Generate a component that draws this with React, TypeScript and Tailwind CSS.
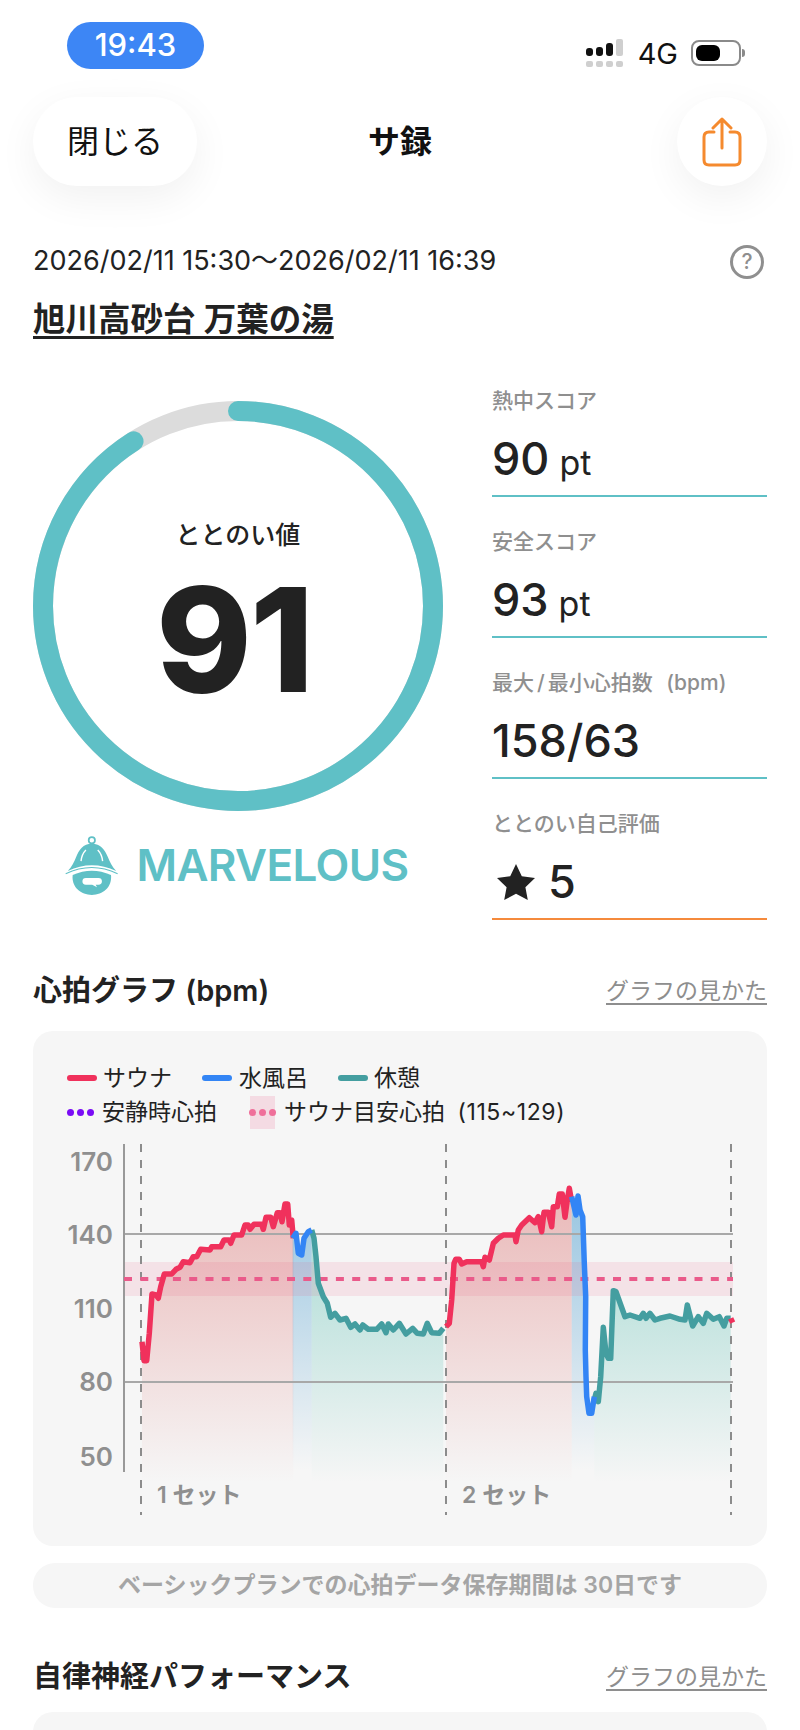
import React from 'react';

type Raw = [number, number][];

// Trazos leidos de los recortes: origen del recorte + coordenada / 3
function toPts(ox: number, oy: number, raw: Raw): Raw {
  return raw.map(([x, y]) => [ox + x / 3, oy + y / 3] as [number, number]);
}

const red1 = toPts(130, 1190, [
  [36, 455], [42, 512], [50, 512], [58, 430], [66, 312], [78, 315], [85, 325], [92, 290], [103, 252], [125, 252],
  [138, 238], [150, 232], [160, 215], [180, 218], [190, 200], [200, 200], [212, 178], [240, 180], [245, 170], [272, 170],
  [282, 150], [298, 150], [302, 160], [312, 135], [335, 135], [345, 105], [355, 105], [360, 118], [372, 103], [395, 103],
  [400, 118], [408, 82], [422, 82], [430, 110], [442, 68], [450, 68], [456, 95], [465, 42], [473, 42], [478, 105],
  [485, 90], [490, 145],
]);
const blue1 = toPts(280, 1190, [[38, 145], [48, 130], [55, 190], [65, 195], [72, 145], [85, 125], [95, 120]]);
const teal1 = toPts(280, 1190, [
  [95, 120], [102, 145], [108, 200], [115, 280], [130, 320], [142, 340], [152, 382], [165, 370], [180, 390], [198, 385],
  [212, 412], [225, 402], [240, 420], [248, 405], [265, 418], [290, 418], [305, 402], [318, 428], [325, 402], [340, 420],
  [358, 400], [378, 432], [398, 415], [412, 430], [430, 432], [442, 400], [455, 428], [478, 430], [490, 415],
]);
const red2 = toPts(440, 1180, [
  [18, 440], [28, 430], [35, 360], [42, 250], [47, 238], [58, 238], [65, 252], [80, 245], [125, 245], [130, 260],
  [135, 232], [148, 240], [160, 190], [175, 175], [190, 165], [225, 165], [228, 185], [235, 150], [245, 135], [268, 113],
  [285, 128], [295, 110], [305, 155], [312, 97], [325, 97], [335, 140], [340, 80], [352, 80], [358, 42], [367, 42],
  [375, 112], [382, 60], [388, 25], [395, 65],
]);
const blue2 = [
  ...toPts(440, 1180, [[395, 50], [408, 105], [414, 48], [420, 90], [428, 110], [433, 250], [437, 350]]),
  ...toPts(560, 1250, [[76, 300], [78, 380], [80, 440], [87, 490], [95, 490], [103, 440]]),
];
const teal2 = toPts(560, 1250, [
  [103, 450], [108, 430], [115, 455], [122, 380], [130, 232], [138, 310], [145, 325], [152, 325], [160, 122], [168, 125],
  [195, 200], [210, 195], [240, 205], [250, 190], [258, 205], [270, 190], [285, 210], [300, 205], [330, 198], [360, 208],
  [375, 210], [382, 165], [398, 228], [415, 200], [430, 220], [440, 190], [460, 208], [478, 200], [492, 228], [500, 205],
  [512, 205],
]);
const redEnd = toPts(560, 1250, [[512, 205], [518, 218]]);

const line = (p: Raw) => p.map(([x, y]) => `${x.toFixed(1)},${y.toFixed(1)}`).join(' ');
const area = (p: Raw) => {
  const bottom = 1482;
  return `${p[0][0].toFixed(1)},${bottom} ${line(p)} ${p[p.length - 1][0].toFixed(1)},${bottom}`;
};

const yLabels: [string, number][] = [['170', 1171], ['140', 1244], ['110', 1318], ['80', 1391], ['50', 1466]];

function HeartChart() {
  return (
    <svg width="734" height="410" viewBox="33 1136 734 410" className="mt-[7px] block">
      <defs>
        <linearGradient id="gradRed" gradientUnits="userSpaceOnUse" x1="0" y1="1200" x2="0" y2="1482">
          <stop offset="0" stopColor="#d8605f" stopOpacity="0.4" />
          <stop offset="1" stopColor="#d8605f" stopOpacity="0" />
        </linearGradient>
        <linearGradient id="gradBlue" gradientUnits="userSpaceOnUse" x1="0" y1="1200" x2="0" y2="1470">
          <stop offset="0" stopColor="#4f9fd0" stopOpacity="0.55" />
          <stop offset="1" stopColor="#4f9fd0" stopOpacity="0" />
        </linearGradient>
        <linearGradient id="gradTeal" gradientUnits="userSpaceOnUse" x1="0" y1="1220" x2="0" y2="1482">
          <stop offset="0" stopColor="#3fb5a5" stopOpacity="0.42" />
          <stop offset="1" stopColor="#3fb5a5" stopOpacity="0" />
        </linearGradient>
      </defs>

      <polygon points={area(red1)} fill="url(#gradRed)" />
      <polygon points={area(blue1)} fill="url(#gradBlue)" />
      <polygon points={area(teal1)} fill="url(#gradTeal)" />
      <polygon points={area(red2)} fill="url(#gradRed)" />
      <polygon points={area(blue2)} fill="url(#gradBlue)" />
      <polygon points={area(teal2)} fill="url(#gradTeal)" />

      <rect x="124" y="1262" width="609" height="34" fill="#e8557f" opacity="0.12" />
      <line x1="124" y1="1234" x2="733" y2="1234" stroke="#a8a8a8" strokeWidth="2" />
      <line x1="124" y1="1382" x2="733" y2="1382" stroke="#a8a8a8" strokeWidth="2" />
      <line x1="124" y1="1144" x2="124" y2="1472" stroke="#999999" strokeWidth="2" />
      {[141, 446, 731].map(x => (
        <line key={x} x1={x} y1="1144" x2={x} y2="1515" stroke="#8c8c8c" strokeWidth="2" strokeDasharray="8 8" />
      ))}
      <line x1="124" y1="1279" x2="733" y2="1279" stroke="#ea5a8a" strokeWidth="4" strokeDasharray="8 8.3" />

      <g fill="none" strokeWidth="5.5" strokeLinejoin="round">
        <polyline points={line(teal1)} stroke="#449ea0" />
        <polyline points={line(teal2)} stroke="#449ea0" />
        <polyline points={line(red1)} stroke="#f0315c" />
        <polyline points={line(red2)} stroke="#f0315c" />
        <polyline points={line(redEnd)} stroke="#f0315c" />
        <polyline points={line(blue1)} stroke="#3385f5" />
        <polyline points={line(blue2)} stroke="#3385f5" />
      </g>

      <g className="font-semibold" fill="#8f8f8f" fontSize="26" textAnchor="end">
        {yLabels.map(([label, y]) => (
          <text key={label} x="113" y={y}>{label}</text>
        ))}
      </g>
      <g className="font-semibold" fill="#8f8f8f" fontSize="23">
        <text x="157" y="1503">1 セット</text>
        <text x="462" y="1503">2 セット</text>
      </g>
    </svg>
  );
}

function Dots({ color }: { color: string }) {
  return (
    <div className="flex gap-[3px]">
      {[0, 1, 2].map(i => (
        <div key={i} className="w-[7px] h-[7px] rounded-full" style={{ backgroundColor: color }} />
      ))}
    </div>
  );
}

function Stat({ label, children, orange }: { label: React.ReactNode; children: React.ReactNode; orange?: boolean }) {
  return (
    <div className={`h-[141px] border-b-2 pt-[31px] ${orange ? 'border-[#f58a3c]' : 'border-[#5fc0c6]'}`}>
      <div className="text-[21px] leading-[28px] font-medium text-[#8f8f8f] whitespace-nowrap">{label}</div>
      <div className="mt-[19px] h-[50px] flex items-baseline leading-[50px] text-[#222222] whitespace-nowrap">{children}</div>
    </div>
  );
}

function Helmet() {
  return (
    <svg width="54" height="60" viewBox="40 75 155 172" fill="#5fc0c6">
      <circle cx="117" cy="90" r="9" fill="none" stroke="#5fc0c6" strokeWidth="5" />
      <path d="M117 100C92 100 80 118 72 138C66 152 60 166 48 178Q117 145 187 178C175 166 169 152 163 138C155 118 142 100 117 100Z" />
      <path d="M86 150Q88 130 100 118M148 150Q146 130 134 118" fill="none" stroke="#ffffff" strokeWidth="4" />
      <path d="M42 186Q117 150 191 186" fill="none" stroke="#5fc0c6" strokeWidth="3" />
      <path d="M62 190Q117 165 172 190C176 225 148 247 117 247C86 247 58 225 62 190Z" />
      <path d="M100 198H136Q146 198 146 208Q146 218 136 218H128L132 225L118 218H100Q90 218 90 208Q90 198 100 198Z" fill="#ffffff" />
    </svg>
  );
}

function SectionTitle({ title }: { title: string }) {
  return (
    <div className="h-[40px] flex items-center justify-between">
      <div className="text-[29px] font-semibold text-[#222222] whitespace-nowrap">{title}</div>
      <div className="text-[23px] text-[#8e8e8e] underline underline-offset-4 whitespace-nowrap">グラフの見かた</div>
    </div>
  );
}

export default function App() {
  return (
    <div className="w-[800px] h-[1730px] overflow-hidden bg-white pt-[22px] font-['Inter','Noto_Sans_CJK_JP',sans-serif] text-[#222222]">
      {/* status bar */}
      <div className="h-[47px] flex justify-between pl-[67px] pr-[55px]">
        <div className="w-[137px] h-[47px] rounded-full bg-[#3d86f5] flex items-center justify-center text-white text-[31px] font-medium">19:43</div>
        <div className="mt-[17px] h-[28px] flex items-center gap-[13px]">
          <svg width="42" height="28" viewBox="0 0 42 28" className="mr-[-2px]">
            {[0, 10, 20, 30].map(x => (
              <rect key={x} x={x + 1} y="22" width="7" height="6" rx="2" fill="#cfcfcf" />
            ))}
            <rect x="1" y="9" width="7" height="8" rx="3" fill="#111111" />
            <rect x="11" y="8" width="7" height="9" rx="3" fill="#111111" />
            <rect x="21" y="4" width="7" height="13" rx="3" fill="#111111" />
            <rect x="31" y="0" width="7" height="17" rx="2" fill="#cfcfcf" />
          </svg>
          <span className="text-[29px] leading-none text-[#111111]">4G</span>
          <div className="flex items-center gap-[1px]">
            <div className="w-[50px] h-[26px] rounded-[8px] border-2 border-[#8a8a8a] p-[3px]">
              <div className="w-[24px] h-full rounded-[6px] bg-black" />
            </div>
            <div className="w-[3px] h-[8px] rounded-r-full bg-[#8a8a8a]" />
          </div>
        </div>
      </div>

      {/* header */}
      <div className="mt-[28px] h-[89px] px-[33px] grid grid-cols-[1fr_auto_1fr] items-center">
        <div className="justify-self-start w-[164px] h-[89px] rounded-[44px] bg-white shadow-[0_12px_40px_rgba(0,0,0,0.06)] flex items-center justify-center text-[32px] text-[#111111]">閉じる</div>
        <div className="text-[32px] font-bold text-[#111111]">サ録</div>
        <div className="justify-self-end w-[90px] h-[89px] rounded-full bg-white shadow-[0_12px_40px_rgba(0,0,0,0.06)] flex items-center justify-center">
          <svg width="40" height="50" viewBox="0 0 40 50" fill="none" stroke="#f58a2e" strokeWidth="3" strokeLinecap="round" strokeLinejoin="round">
            <path d="M12 15H7Q2 15 2 20V43Q2 48 7 48H33Q38 48 38 43V20Q38 15 33 15H28" />
            <path d="M20 31V2M11 11L20 2L29 11" />
          </svg>
        </div>
      </div>

      {/* date + venue */}
      <div className="mt-[59px] h-[33px] px-[33px] flex items-center justify-between">
        <div className="text-[27px] whitespace-nowrap">2026/02/11 15:30～2026/02/11 16:39</div>
        <div className="w-[34px] h-[34px] -translate-x-[3px] rounded-full border-[3px] border-[#8f8f8f] flex items-center justify-center text-[21px] font-medium text-[#8f8f8f]">?</div>
      </div>
      <div className="mt-[22px] px-[33px] h-[40px] leading-[40px]">
        <span className="text-[32.5px] font-semibold underline decoration-[3px] underline-offset-[5px] whitespace-nowrap">旭川高砂台 万葉の湯</span>
      </div>

      {/* score */}
      <div className="mt-[14px] px-[33px] flex justify-between">
        <div className="pt-[47px] w-[410px]">
          <div className="relative w-[410px] h-[410px]">
            <svg width="410" height="410" viewBox="0 0 410 410">
              <circle cx="205" cy="205" r="195" fill="none" stroke="#dcdcdc" strokeWidth="20" />
              <circle cx="205" cy="205" r="195" fill="none" stroke="#5fc0c6" strokeWidth="20" strokeLinecap="round" pathLength={100} strokeDasharray="91 100" transform="rotate(-90 205 205)" />
            </svg>
            <div className="absolute inset-0 flex flex-col items-center">
              <div className="mt-[118px] text-[25px] leading-[32px] font-medium">ととのい値</div>
              <div className="mt-[15px] -translate-x-[4px] text-[145px] leading-[147px] font-extrabold tracking-[-2px]">91</div>
            </div>
          </div>
          <div className="mt-[24px] -translate-x-[1px] flex items-center justify-center gap-[17px]">
            <Helmet />
            <span className="text-[44px] leading-[57px] font-semibold tracking-[-0.6px] text-[#5fc0c6]">MARVELOUS</span>
          </div>
        </div>
        <div className="mt-[2px] w-[275px]">
          <Stat label="熱中スコア">
            <span className="text-[45px] font-medium">90</span>
            <span className="ml-[10px] text-[34px]">pt</span>
          </Stat>
          <Stat label="安全スコア">
            <span className="text-[45px] font-medium">93</span>
            <span className="ml-[10px] text-[34px]">pt</span>
          </Stat>
          <Stat label={<span className="[word-spacing:8px]">最大<span className="mx-[3px]">/</span>最小心拍数 (bpm)</span>}>
            <span className="text-[45px] font-medium">158/63</span>
          </Stat>
          <Stat label="ととのい自己評価" orange>
            <svg width="40" height="38" viewBox="0 0 40 38" fill="#222222" className="self-center ml-[4px]">
              <path d="M20 1L25.8 13.2L39 15L29.4 24.2L31.8 37L20 30.8L8.2 37L10.6 24.2L1 15L14.2 13.2Z" />
            </svg>
            <span className="ml-[12px] text-[45px] font-medium">5</span>
          </Stat>
        </div>
      </div>

      {/* heart chart */}
      <div className="mt-[51px] px-[33px]">
        <SectionTitle title="心拍グラフ (bpm)" />
        <div className="mt-[20px] h-[515px] rounded-[20px] bg-[#f6f6f6] pt-[32px] overflow-hidden">
          <div className="h-[30px] pl-[34px] flex items-center text-[23px] leading-none">
            <div className="w-[30px] h-[6px] rounded-full bg-[#f0315c]" />
            <span className="ml-[6px]">サウナ</span>
            <div className="ml-[30px] w-[30px] h-[6px] rounded-full bg-[#3385f5]" />
            <span className="ml-[7px]">水風呂</span>
            <div className="ml-[30px] w-[30px] h-[6px] rounded-full bg-[#449ea0]" />
            <span className="ml-[6px]">休憩</span>
          </div>
          <div className="mt-[2px] h-[34px] pl-[34px] flex items-center text-[23px] leading-none">
            <Dots color="#7a0cf5" />
            <span className="ml-[8px]">安静時心拍</span>
            <div className="ml-[33px] w-[25px] h-[33px] bg-[#f4dbe3] flex items-center justify-center">
              <div className="shrink-0"><Dots color="#ef6f9a" /></div>
            </div>
            <span className="ml-[9px] [word-spacing:6px]">サウナ目安心拍 <span className="tracking-[0.6px]">(115~129)</span></span>
          </div>
          <HeartChart />
        </div>
        <div className="mt-[17px] h-[45px] rounded-[22px] bg-[#f6f6f6] flex items-center justify-center text-[23px] font-semibold text-[#a5a5a5] whitespace-nowrap">
          ベーシックプランでの心拍データ保存期間は 30日です
        </div>
      </div>

      {/* autonomic */}
      <div className="mt-[49px] px-[33px]">
        <SectionTitle title="自律神経パフォーマンス" />
        <div className="mt-[15px] h-[40px] rounded-t-[20px] bg-[#f6f6f6]" />
      </div>
    </div>
  );
}
